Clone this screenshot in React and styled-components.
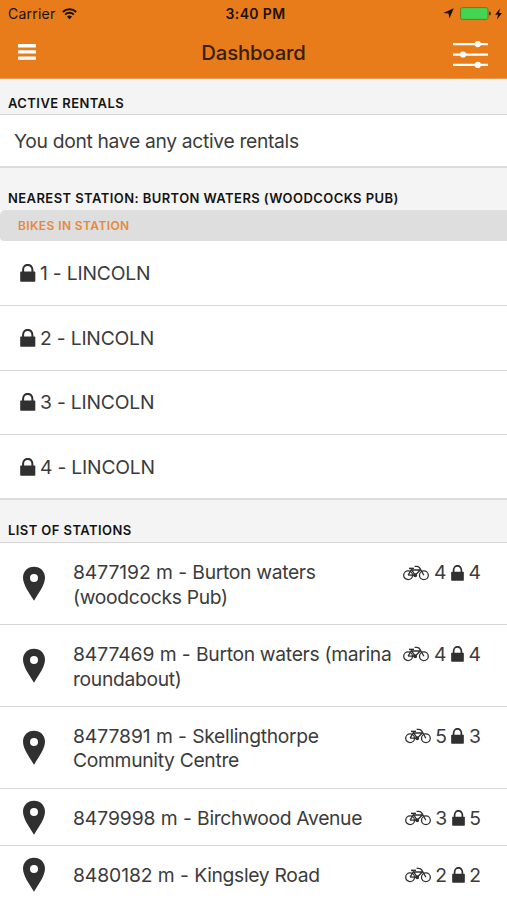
import React from "react";
import styled, {createGlobalStyle} from "styled-components";

const GlobalStyle = createGlobalStyle`
  * {
    box-sizing: border-box;
  }

  body {
    margin: 0;
    background: #fff;
    color: #3b3b3b;
    font-family: Inter, "Liberation Sans", sans-serif;
  }
`;

const Screen = styled.div`
  width: 507px;
  height: 900px;
  overflow: hidden;
  background: #f4f4f4;
`;

const Header = styled.header`
  height: 79px;
  background: #e87c1b;
  border-bottom: 1px solid #e39a58;
`;

const StatusBar = styled.div`
  display: grid;
  grid-template-columns: 1fr auto 1fr;
  align-items: center;
  height: 27px;
  padding: 0 5px 0 8px;
  color: #1d1004;
  font-size: 14px;
`;

const Carrier = styled.div`
  display: flex;
  align-items: center;
  gap: 7px;
  letter-spacing: 0.22px;
`;

const Clock = styled.div`
  padding-left: 1px;
  font-weight: 600;
  letter-spacing: 0.35px;
`;

const StatusIcons = styled.div`
  display: flex;
  align-items: center;
  justify-content: flex-end;
  gap: 4px;
`;

const NavBar = styled.div`
  display: grid;
  grid-template-columns: 60px 1fr 60px;
  align-items: center;
  height: 51px;
`;

const NavButton = styled.button`
  display: flex;
  justify-content: ${(props) => (props.$end ? "flex-end" : "flex-start")};
  border: 0;
  padding: ${(props) => (props.$end ? "3px 19px 0 0" : "0 0 1px 18px")};
  background: none;
`;

const Title = styled.h1`
  margin: 0;
  color: #36200b;
  font-size: 20.3px;
  font-weight: 500;
  letter-spacing: -0.15px;
  text-align: center;
`;

const SectionTitle = styled.h2`
  display: flex;
  align-items: flex-end;
  height: ${(props) => props.$height}px;
  margin: 0;
  padding: 0 8px ${(props) => props.$bottom || 4}px;
  color: #141414;
  font-size: 13px;
  font-weight: 600;
  line-height: 16px;
  letter-spacing: 0.42px;
  text-transform: uppercase;
`;

const Card = styled.section`
  background: #fff;
  border-top: ${(props) => (props.$flush ? "0" : "1px solid #d6d6d6")};
  border-bottom: 2px solid #dcdcdc;
`;

const EmptyText = styled.p`
  margin: 0;
  padding: 14px 14px 12px;
  font-size: 19.3px;
  line-height: 25px;
  letter-spacing: -0.33px;
`;

const Divider = styled.h3`
  margin: 0;
  padding: 1px 18px 0;
  border-radius: 5px 0 0 4px;
  background: #dedede;
  color: #e5893a;
  font-size: 12px;
  font-weight: 600;
  line-height: 30px;
  letter-spacing: 0.4px;
  text-transform: uppercase;
`;

const BikeRow = styled.div`
  display: flex;
  align-items: center;
  gap: 4.5px;
  height: ${(props) => (props.$last ? 63 : 64.8)}px;
  padding: 0 20px;
  border-bottom: ${(props) => (props.$last ? 0 : "1px solid #d6d6d6")};
  font-size: 19.3px;
  letter-spacing: -0.2px;
`;

const StationRow = styled.div`
  display: grid;
  grid-template-columns: 51px 1fr auto;
  align-items: center;
  padding: 17px 26px 15px 22px;
  border-bottom: 1px solid #d6d6d6;
  font-size: 19.3px;
  line-height: 24.4px;
`;

const Pin = styled.svg`
  display: block;
  margin: -7px 0 -6px;
`;

const StationName = styled.span`
  letter-spacing: -0.32px;
  white-space: pre;
`;

const Distance = styled.span`
  letter-spacing: -0.07px;
`;

const Counts = styled.span`
  display: flex;
  align-self: start;
  align-items: center;
  gap: 4.6px;
  height: 24.4px;
`;

const MenuIcon = () => (
  <svg width="18" height="16" viewBox="0 0 18 16" fill="#fff">
    <rect width="18" height="3.4" rx="0.5" />
    <rect y="6.2" width="18" height="3.4" rx="0.5" />
    <rect y="12.4" width="18" height="3.4" rx="0.5" />
  </svg>
);

const SlidersIcon = () => (
  <svg width="35" height="28" viewBox="0 0 35 28" fill="#fff">
    <path d="M0 3h35v2.3H0zM0 13.4h35v2.3H0zM0 23.8h35v2.3H0z" />
    <circle cx="24.8" cy="4.1" r="3.1" />
    <circle cx="10" cy="14.5" r="3.1" />
    <circle cx="24.8" cy="24.9" r="3.1" />
  </svg>
);

const WifiIcon = () => (
  <svg width="15" height="12" viewBox="0 0 15 12" fill="none" stroke="#1d1004">
    <path d="M0.8 4a9.6 9.6 0 0 1 13.4 0" strokeWidth="2" />
    <path d="M3.2 6.6a6.1 6.1 0 0 1 8.6 0" strokeWidth="2" />
    <path d="M7.5 11.2L5 8.7a3.6 3.6 0 0 1 5 0z" fill="#1d1004" stroke="none" />
  </svg>
);

const LocationIcon = () => (
  <svg width="13" height="11" viewBox="0 0 13 11" fill="#1d1004">
    <path d="M10.8.3L6.4 10.6 5.6 5.6.4 5z" />
  </svg>
);

const BatteryIcon = () => (
  <svg width="31" height="13" viewBox="0 0 31 13">
    <rect
      x="0.6"
      y="0.6"
      width="27.4"
      height="11.8"
      rx="1.8"
      fill="#43d551"
      stroke="#6b7a1e"
    />
    <path d="M29 4.5a2 2 0 0 1 0 4z" fill="#5a300a" />
  </svg>
);

const BoltIcon = () => (
  <svg width="7" height="12" viewBox="0 0 7 12" fill="#1d1004">
    <path d="M4.8.4L.2 6.8h2.8L2 11.6 6.9 5H4.1z" />
  </svg>
);

const LockIcon = ({width = 15.5, height = 18}) => (
  <svg
    width={width}
    height={height}
    viewBox="0 0 16 18"
    preserveAspectRatio="none"
  >
    <path
      d="M3.2 9V5.7a4.8 4.8 0 0 1 9.6 0V9"
      fill="none"
      stroke="#303030"
      strokeWidth="2.1"
    />
    <rect x="0.2" y="7.6" width="15.6" height="10.2" rx="0.8" fill="#303030" />
  </svg>
);

const PinIcon = () => (
  <Pin width="24" height="36" viewBox="0 0 24 36" fill="#303030">
    <path
      fillRule="evenodd"
      d="M12 .8C5.6.8 1 5.5 1 11.6 1 19 7.2 26.8 12 34.8 16.8 26.8 23 19 23 11.6 23 5.5 18.4.8 12 .8zm0 7.2a4 4 0 1 1 0 8 4 4 0 0 1 0-8z"
    />
  </Pin>
);

const BikeIcon = () => (
  <svg
    width="26"
    height="16"
    viewBox="0 0 26 16"
    fill="none"
    stroke="#303030"
    strokeWidth="1.3"
    strokeLinejoin="round"
  >
    <circle cx="5.1" cy="10.2" r="4.4" />
    <circle cx="20.9" cy="10.2" r="4.4" />
    <path d="M5.1 10.2L8.4 4.6l3.8 5.6H5.1M8.4 5h8.8l-5 5.2M20.9 10.2L17 3.4Q15.9 1.4 13.8 1.4H11.6" />
    <path d="M6 3.4h5" strokeWidth="1.5" />
    <circle cx="12.2" cy="10.2" r="1.3" fill="#303030" />
  </svg>
);

const bikes = [1, 2, 3, 4];

const stations = [
  {distance: 8477192, name: "Burton waters\n(woodcocks Pub)", bikes: 4, docks: 4},
  {distance: 8477469, name: "Burton waters (marina\nroundabout)", bikes: 4, docks: 4},
  {distance: 8477891, name: "Skellingthorpe\nCommunity Centre", bikes: 5, docks: 3},
  {distance: 8479998, name: "Birchwood Avenue", bikes: 3, docks: 5},
  {distance: 8480182, name: "Kingsley Road", bikes: 2, docks: 2},
];

const Dashboard = () => (
  <Screen>
    <GlobalStyle />
    <Header>
      <StatusBar>
        <Carrier>
          Carrier
          <WifiIcon />
        </Carrier>
        <Clock>3:40 PM</Clock>
        <StatusIcons>
          <LocationIcon />
          <BatteryIcon />
          <BoltIcon />
        </StatusIcons>
      </StatusBar>
      <NavBar>
        <NavButton aria-label="Menu">
          <MenuIcon />
        </NavButton>
        <Title>Dashboard</Title>
        <NavButton aria-label="Filters" $end>
          <SlidersIcon />
        </NavButton>
      </NavBar>
    </Header>

    <SectionTitle $height={35} $bottom={3}>
      Active rentals
    </SectionTitle>
    <Card>
      <EmptyText>You dont have any active rentals</EmptyText>
    </Card>

    <SectionTitle $height={42}>
      Nearest station: Burton Waters (Woodcocks Pub)
    </SectionTitle>
    <Card $flush>
      <Divider>Bikes in station</Divider>
      {bikes.map((bike) => (
        <BikeRow key={bike} $last={bike === bikes.length}>
          <LockIcon />
          {`${bike} - LINCOLN`}
        </BikeRow>
      ))}
    </Card>

    <SectionTitle $height={42}>List of stations</SectionTitle>
    <Card>
      {stations.map((station) => (
        <StationRow key={station.distance}>
          <PinIcon />
          <StationName>
            <Distance>{`${station.distance} m - `}</Distance>
            {station.name}
          </StationName>
          <Counts>
            <BikeIcon />
            {station.bikes}
            <LockIcon width={13} height={16} />
            {station.docks}
          </Counts>
        </StationRow>
      ))}
    </Card>
  </Screen>
);

export default Dashboard;
